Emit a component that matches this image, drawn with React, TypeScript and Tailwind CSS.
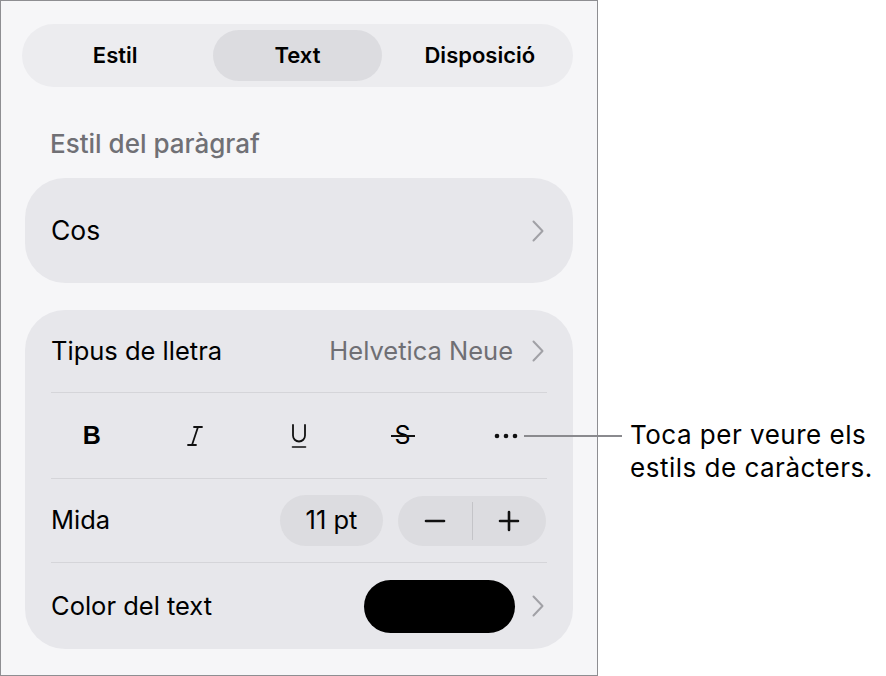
const FONT = "font-['Inter','Liberation_Sans',sans-serif]";

function Chevron() {
    return (
        <svg width="12" height="22" viewBox="0 0 12 22" fill="none" stroke="#a1a1a6" strokeWidth="2" strokeLinecap="round" strokeLinejoin="round">
            <path d="M1.5 1.5L10.5 11L1.5 20.5" />
        </svg>
    );
}

function Divider() {
    return <div className="h-px bg-[#d5d5d9] mx-[26px]" />;
}

export default function App() {
    return (
        <div className={`relative w-[886px] h-[676px] bg-white flex ${FONT} antialiased`}>
            {/* Inspector panel */}
            <div className="w-[598px] h-[676px] shrink-0 border border-[#8e8e92] bg-[#f6f6f8] pl-[21px] pr-[24px] pt-[23px]">
                {/* Tabs */}
                <div className="h-[63px] rounded-full bg-[#ececef] grid grid-cols-3 px-[2px] py-[6px] text-[22px] font-semibold text-black">
                    <div className="flex items-center justify-center mx-[7px]">Estil</div>
                    <div className="flex items-center justify-center mx-[7px] rounded-full bg-[#dcdce0]">Text</div>
                    <div className="flex items-center justify-center mx-[7px]">Disposició</div>
                </div>

                <div className="pl-[28px] pt-[44px] pb-[21px] text-[26px] font-medium text-[#707075] leading-none">
                    Estil del paràgraf
                </div>

                {/* Paragraph style */}
                <div className="ml-[3px] h-[105px] rounded-[40px] bg-[#e7e7eb] flex items-center justify-between pl-[26px] pr-[29px]">
                    <span className="text-[26.5px] text-black">Cos</span>
                    <Chevron />
                </div>

                {/* Font settings */}
                <div className="ml-[3px] mt-[27px] rounded-[40px] bg-[#e7e7eb]">
                    <div className="h-[82px] flex items-center justify-between pl-[26px] pr-[29px]">
                        <span className="text-[25.5px] text-black">Tipus de lletra</span>
                        <div className="flex items-center gap-[19px]">
                            <span className="text-[25.5px] text-[#6f6f74]">Helvetica Neue</span>
                            <Chevron />
                        </div>
                    </div>
                    <Divider />
                    <div className="h-[85px] grid grid-cols-5 items-center px-[15px] text-black">
                        <div className="flex justify-center">
                            <span className="text-[25px] leading-none font-bold font-['Liberation_Sans',sans-serif]">B</span>
                        </div>
                        <div className="flex justify-center">
                            <svg width="18" height="22" viewBox="0 0 18 22" fill="none" stroke="#111" strokeWidth="1.8" strokeLinecap="round">
                                <path d="M8 2h8M2 20h8M12 2L6 20" />
                            </svg>
                        </div>
                        <div className="flex justify-center">
                            <svg width="18" height="26" viewBox="0 0 18 26" fill="none" stroke="#111" strokeWidth="1.8" strokeLinecap="round">
                                <path d="M3 2v10.5a6 6 0 0012 0V2" />
                                <path d="M2.5 24h13" strokeWidth="1.6" />
                            </svg>
                        </div>
                        <div className="flex justify-center">
                            <span className="relative text-[25px] font-['Inter',sans-serif] leading-none">
                                S
                                <span className="absolute left-[-4px] right-[-4px] top-[12px] h-[1.6px] bg-[#111]" />
                            </span>
                        </div>
                        <div className="flex justify-center">
                            <svg width="24" height="6" viewBox="0 0 24 6" fill="#111">
                                <circle cx="3" cy="3" r="2.3" />
                                <circle cx="12" cy="3" r="2.3" />
                                <circle cx="21" cy="3" r="2.3" />
                            </svg>
                        </div>
                    </div>
                    <Divider />
                    <div className="h-[83px] flex items-center justify-between pl-[26px] pr-[27px]">
                        <span className="text-[25.5px] text-black">Mida</span>
                        <div className="flex items-center gap-[15px]">
                            <div className="w-[103px] h-[51px] rounded-full bg-[#dcdce0] flex items-center justify-center text-[25.5px] text-black">
                                11 pt
                            </div>
                            <div className="w-[148px] h-[50px] rounded-full bg-[#dcdce0] flex items-center">
                                <div className="flex-1 flex justify-center">
                                    <svg width="22" height="22" viewBox="0 0 22 22" stroke="#111" strokeWidth="2.6" strokeLinecap="round">
                                        <path d="M2 11h18" />
                                    </svg>
                                </div>
                                <div className="w-px h-[38px] bg-[#c4c4c8]" />
                                <div className="flex-1 flex justify-center">
                                    <svg width="22" height="22" viewBox="0 0 22 22" stroke="#111" strokeWidth="2.6" strokeLinecap="round">
                                        <path d="M2 11h18M11 2v18" />
                                    </svg>
                                </div>
                            </div>
                        </div>
                    </div>
                    <Divider />
                    <div className="h-[86px] flex items-center justify-between pl-[26px] pr-[29px]">
                        <span className="text-[25.5px] text-black">Color del text</span>
                        <div className="flex items-center gap-[17px]">
                            <div className="w-[151px] h-[53px] rounded-full bg-black" />
                            <Chevron />
                        </div>
                    </div>
                </div>
            </div>

            {/* Callout */}
            <div className="absolute left-[524px] top-[435px] w-[98px] h-[2px] bg-[#8a8a8e]" />
            <div className="pl-[32px] pt-[418px] text-[26px] tracking-[0.5px] leading-[33px] text-black">
                <p>Toca per veure els</p>
                <p>estils de caràcters.</p>
            </div>
        </div>
    );
}
